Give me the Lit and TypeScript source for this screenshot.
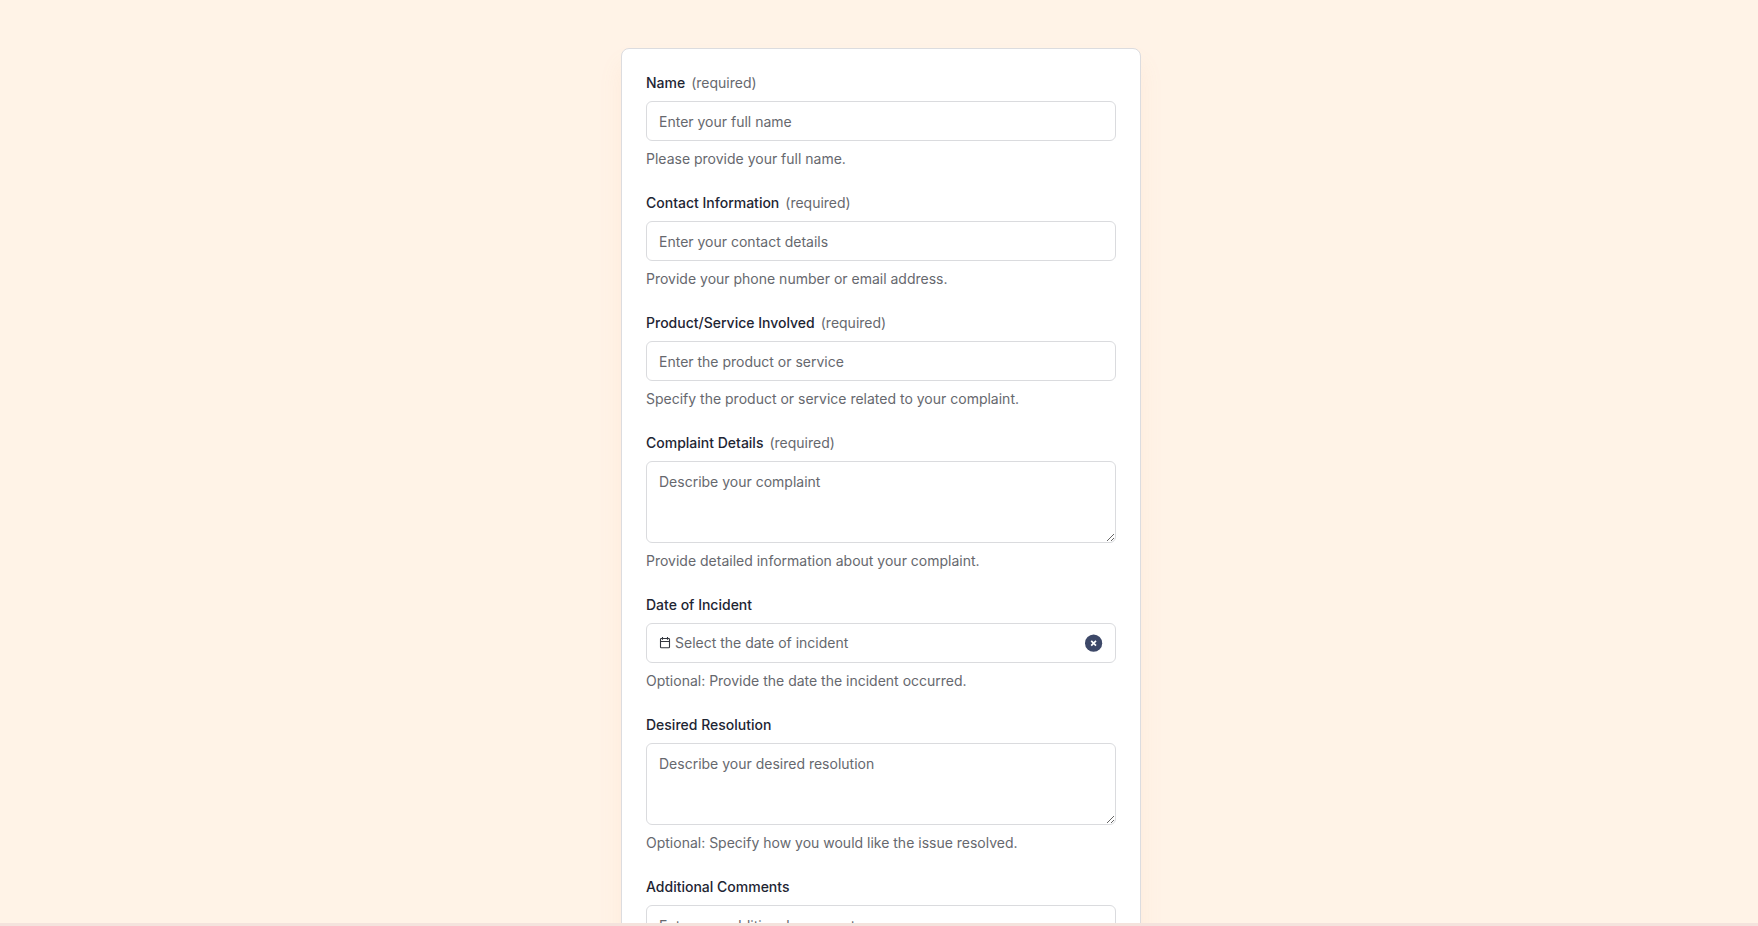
import { LitElement, html, css, nothing } from "lit";
import { customElement } from "lit/decorators.js";

interface Field {
  id: string;
  label: string;
  placeholder: string;
  help: string;
  kind: "text" | "area" | "date";
  required?: boolean;
}

const FIELDS: Field[] = [
  { id: "name", label: "Name", placeholder: "Enter your full name", help: "Please provide your full name.", kind: "text", required: true },
  { id: "contact", label: "Contact Information", placeholder: "Enter your contact details", help: "Provide your phone number or email address.", kind: "text", required: true },
  { id: "product", label: "Product/Service Involved", placeholder: "Enter the product or service", help: "Specify the product or service related to your complaint.", kind: "text", required: true },
  { id: "details", label: "Complaint Details", placeholder: "Describe your complaint", help: "Provide detailed information about your complaint.", kind: "area", required: true },
  { id: "date", label: "Date of Incident", placeholder: "Select the date of incident", help: "Optional: Provide the date the incident occurred.", kind: "date" },
  { id: "resolution", label: "Desired Resolution", placeholder: "Describe your desired resolution", help: "Optional: Specify how you would like the issue resolved.", kind: "area" },
  { id: "comments", label: "Additional Comments", placeholder: "Enter any additional comments", help: "", kind: "area" },
];

@customElement("app-root")
export class AppRoot extends LitElement {
  static styles = css`
    :host {
      display: block;
      box-sizing: border-box;
      height: 100vh;
      overflow-y: auto;
      scrollbar-width: none;
      border-bottom: 3px solid #f4e3dd;
      background: #fff3e7;
      font-family: Inter, sans-serif;
      font-size: 14px;
      line-height: 20px;
      color: #1e2533;
    }
    .page {
      display: flex;
      justify-content: center;
      padding: 48px 16px 48px 20px;
    }
    .card {
      box-sizing: border-box;
      width: 100%;
      max-width: 520px;
      display: flex;
      flex-direction: column;
      gap: 24px;
      padding: 24px;
      background: #fff;
      border: 1px solid #dcdcdf;
      border-radius: 8px;
      box-shadow: 0 16px 24px rgba(240, 150, 110, 0.09);
    }
    .field {
      display: flex;
      flex-direction: column;
      gap: 8px;
    }
    .label {
      display: flex;
      gap: 6px;
      font-weight: 500;
    }
    .required {
      font-weight: 400;
      color: #66686e;
    }
    .control {
      box-sizing: border-box;
      width: 100%;
      margin: 0;
      border: 1px solid #dadbde;
      border-radius: 6px;
      background: #fff;
      color: inherit;
      font: inherit;
    }
    .text {
      height: 40px;
      padding: 0 12px;
    }
    .area {
      display: block;
      height: 82px;
      padding: 10px 12px;
      resize: vertical;
    }
    .date {
      display: flex;
      align-items: center;
      gap: 4px;
      height: 40px;
      padding: 0 12px;
    }
    .date-input {
      flex: 1;
      align-self: stretch;
      min-width: 0;
      padding: 0;
      border: 0;
      outline: 0;
      background: none;
      color: inherit;
      font: inherit;
    }
    .control::placeholder,
    .date-input::placeholder {
      color: #66686e;
      opacity: 1;
    }
    .calendar {
      flex: none;
      width: 12px;
      height: 12px;
    }
    .clear {
      display: flex;
      flex: none;
      padding: 0;
      border: 0;
      background: none;
      cursor: pointer;
    }
    .clear-icon {
      width: 18px;
      height: 18px;
    }
    .help {
      margin: 0;
      color: #66686e;
    }
  `;

  private clearDate() {
    const input = this.renderRoot.querySelector<HTMLInputElement>("#date");
    if (input) input.value = "";
  }

  private control(f: Field) {
    if (f.kind === "area") {
      return html`<textarea class="control area" id=${f.id} placeholder=${f.placeholder}></textarea>`;
    }
    if (f.kind === "date") {
      return html`<div class="control date">
        <svg class="calendar" viewBox="0 0 12 12" fill="none" stroke="#34373e" aria-hidden="true">
          <rect x="1.5" y="1.5" width="9" height="9.3" rx="0.8" stroke-width="1.1" />
          <path d="M1.5 4.5H10.5" stroke-width="1" />
          <path d="M3.5 0V2.8M8.5 0V2.8" stroke-width="1.1" />
        </svg>
        <input class="date-input" id=${f.id} type="text" placeholder=${f.placeholder} />
        <button class="clear" type="button" aria-label="Clear date" @click=${this.clearDate}>
          <svg class="clear-icon" viewBox="0 0 18 18" aria-hidden="true">
            <circle cx="8.6" cy="9.2" r="8.6" fill="#3d4868" />
            <path d="M6.2 6.8L11 11.6M11 6.8L6.2 11.6" stroke="#fff" stroke-width="1.7" />
          </svg>
        </button>
      </div>`;
    }
    return html`<input class="control text" id=${f.id} type="text" placeholder=${f.placeholder} />`;
  }

  render() {
    return html`<main class="page">
      <form class="card">
        ${FIELDS.map(
          (f) => html`<div class="field">
            <label class="label" for=${f.id}>
              <span>${f.label}</span>
              ${f.required ? html`<span class="required">(required)</span>` : nothing}
            </label>
            ${this.control(f)}
            ${f.help ? html`<p class="help">${f.help}</p>` : nothing}
          </div>`
        )}
      </form>
    </main>`;
  }
}
